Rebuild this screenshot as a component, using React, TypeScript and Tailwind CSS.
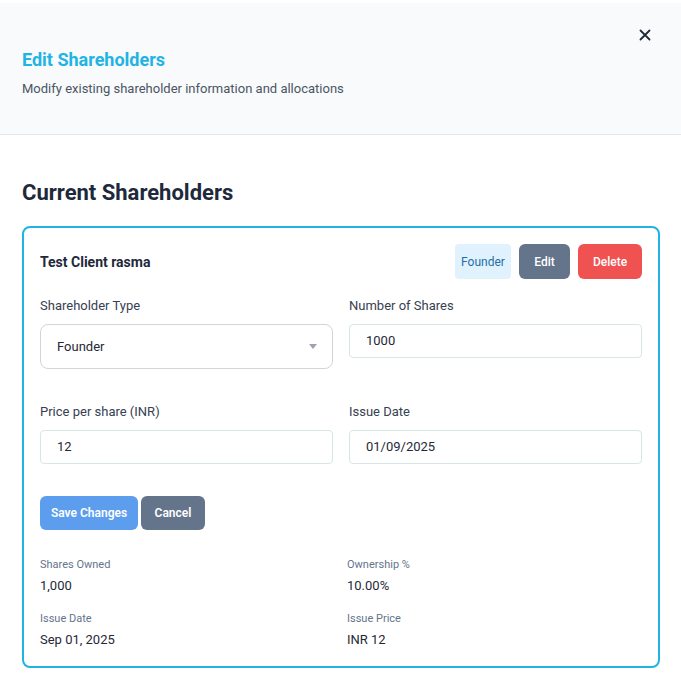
import React from "react";

const font = { fontFamily: 'Roboto, "Noto Sans", sans-serif' };

function Field({ label, value, select }: { label: string; value: string; select?: boolean }) {
  return (
    <div className="flex flex-col">
      <div className="text-[13px] leading-[20px] text-[#374151] pt-[1px]">{label}</div>
      {select ? (
        <div className="mt-[8px] h-[45px] rounded-lg border border-[#d1d5db] bg-white flex items-center justify-between pl-4 pr-[15px]">
          <span className="text-[13px] text-[#1f2937]">{value}</span>
          <svg width="8" height="5" viewBox="0 0 8 5">
            <path d="M0 0 L8 0 L4 5 Z" fill="#9ca3af" />
          </svg>
        </div>
      ) : (
        <div className="mt-[8px] h-[34px] rounded-[4px] border border-[#d8e6e8] bg-white flex items-center pl-4">
          <span className="text-[13px] text-[#1f2937]">{value}</span>
        </div>
      )}
    </div>
  );
}

function Stat({ label, value }: { label: string; value: string }) {
  return (
    <div className="flex flex-col">
      <div className="text-[11px] leading-[16px] text-[#64748b] pt-[1px]">{label}</div>
      <div className="mt-[3px] text-[13px] leading-[20px] text-[#1f2937]">{value}</div>
    </div>
  );
}

export default function App() {
  return (
    <div className="w-[681px] h-[675px] bg-white overflow-hidden" style={font}>
      <div className="mt-[3px] h-[132px] bg-[#f8fafc] border-b border-[#e2e8f0] flex justify-between pl-[22px] pr-[28px]">
        <div className="pt-[45px]">
          <div className="text-[18px] leading-[24px] font-bold text-[#1fb4e3]">Edit Shareholders</div>
          <div className="mt-[7px] text-[13px] leading-[20px] text-[#4b5563]">
            Modify existing shareholder information and allocations
          </div>
        </div>
        <div className="pt-[24px]">
          <svg width="16" height="16" viewBox="0 0 16 16">
            <path d="M3.5 3.5 L12.5 12.5 M12.5 3.5 L3.5 12.5" stroke="#1f2937" strokeWidth="1.8" strokeLinecap="round" />
          </svg>
        </div>
      </div>
      <div className="pl-[22px] pr-[21px] pt-[44px]">
        <div className="text-[22px] leading-[28px] font-bold text-[#1e293b]">Current Shareholders</div>
        <div className="mt-[19px] rounded-lg border-2 border-[#1fb4e3] p-4">
          <div className="flex items-center justify-between h-[35px]">
            <div className="text-[14px] font-bold text-[#1e293b] pt-[1px]">Test Client rasma</div>
            <div className="flex gap-2 h-[35px]">
              <div className="w-[56px] rounded-[4px] bg-[#e0f2fe] text-[#1f6fa5] text-[12px] flex items-center justify-center">Founder</div>
              <div className="w-[51px] rounded-md bg-[#64748b] text-white text-[12px] font-medium flex items-center justify-center">Edit</div>
              <div className="w-[64px] rounded-md bg-[#f05252] text-white text-[12px] font-medium flex items-center justify-center">Delete</div>
            </div>
          </div>
          <div className="mt-4 grid grid-cols-2 gap-x-4 gap-y-8 items-start">
            <Field label="Shareholder Type" value="Founder" select />
            <Field label="Number of Shares" value="1000" />
            <Field label="Price per share (INR)" value="12" />
            <Field label="Issue Date" value="01/09/2025" />
          </div>
          <div className="mt-8 flex gap-[3px]">
            <div className="w-[98px] h-[34px] rounded-md bg-[#5c9ded] text-white text-[12px] font-semibold flex items-center justify-center">Save Changes</div>
            <div className="w-[64px] h-[34px] rounded-md bg-[#64748b] text-white text-[12px] font-semibold flex items-center justify-center">Cancel</div>
          </div>
          <div className="mt-[26px] grid grid-cols-2 gap-x-3 gap-y-[14px]">
            <Stat label="Shares Owned" value="1,000" />
            <Stat label="Ownership %" value="10.00%" />
            <Stat label="Issue Date" value="Sep 01, 2025" />
            <Stat label="Issue Price" value="INR 12" />
          </div>
        </div>
      </div>
    </div>
  );
}
